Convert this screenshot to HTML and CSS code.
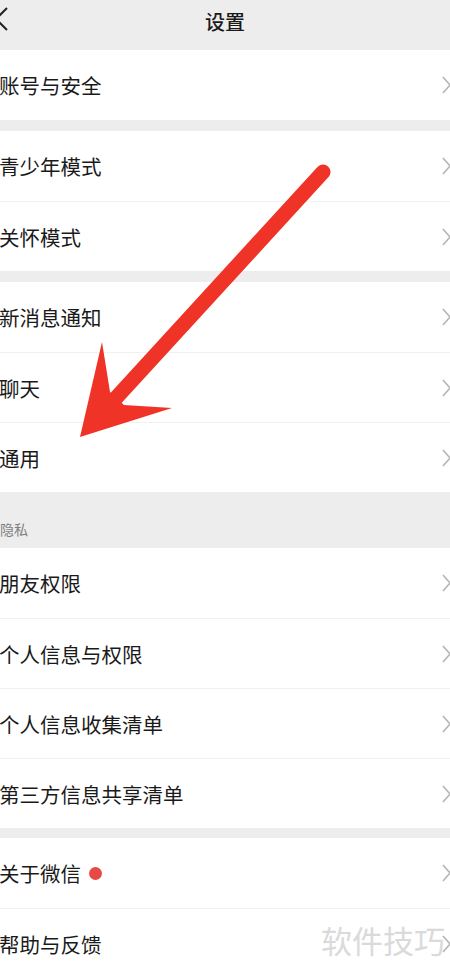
FILE: index.html
```html
<!DOCTYPE html>
<html lang="zh-CN">
<head>
<meta charset="utf-8">
<title>设置</title>
<link rel="stylesheet" href="styles.css">
</head>
<body>
<div class="page">
  <header class="topbar">
    <svg class="back" width="10" height="24" viewBox="0 0 10 24"><path d="M7 1 L-4 12 L7 23" fill="none" stroke="#222" stroke-width="2"/></svg>
    <h1 class="title">设置</h1>
  </header>

  <section class="group">
    <div class="row"><span class="label">账号与安全</span><svg class="chev" width="9" height="18" viewBox="0 0 9 18"><path d="M1 1 L8 9 L1 17" fill="none" stroke="#b5b5b5" stroke-width="1.6"/></svg></div>
  </section>

  <section class="group">
    <div class="row"><span class="label">青少年模式</span><svg class="chev" width="9" height="18" viewBox="0 0 9 18"><path d="M1 1 L8 9 L1 17" fill="none" stroke="#b5b5b5" stroke-width="1.6"/></svg></div>
    <div class="row"><span class="label">关怀模式</span><svg class="chev" width="9" height="18" viewBox="0 0 9 18"><path d="M1 1 L8 9 L1 17" fill="none" stroke="#b5b5b5" stroke-width="1.6"/></svg></div>
  </section>

  <section class="group">
    <div class="row"><span class="label">新消息通知</span><svg class="chev" width="9" height="18" viewBox="0 0 9 18"><path d="M1 1 L8 9 L1 17" fill="none" stroke="#b5b5b5" stroke-width="1.6"/></svg></div>
    <div class="row"><span class="label">聊天</span><svg class="chev" width="9" height="18" viewBox="0 0 9 18"><path d="M1 1 L8 9 L1 17" fill="none" stroke="#b5b5b5" stroke-width="1.6"/></svg></div>
    <div class="row"><span class="label">通用</span><svg class="chev" width="9" height="18" viewBox="0 0 9 18"><path d="M1 1 L8 9 L1 17" fill="none" stroke="#b5b5b5" stroke-width="1.6"/></svg></div>
  </section>

  <div class="section-title">隐私</div>
  <section class="group flush">
    <div class="row"><span class="label">朋友权限</span><svg class="chev" width="9" height="18" viewBox="0 0 9 18"><path d="M1 1 L8 9 L1 17" fill="none" stroke="#b5b5b5" stroke-width="1.6"/></svg></div>
    <div class="row"><span class="label">个人信息与权限</span><svg class="chev" width="9" height="18" viewBox="0 0 9 18"><path d="M1 1 L8 9 L1 17" fill="none" stroke="#b5b5b5" stroke-width="1.6"/></svg></div>
    <div class="row"><span class="label">个人信息收集清单</span><svg class="chev" width="9" height="18" viewBox="0 0 9 18"><path d="M1 1 L8 9 L1 17" fill="none" stroke="#b5b5b5" stroke-width="1.6"/></svg></div>
    <div class="row"><span class="label">第三方信息共享清单</span><svg class="chev" width="9" height="18" viewBox="0 0 9 18"><path d="M1 1 L8 9 L1 17" fill="none" stroke="#b5b5b5" stroke-width="1.6"/></svg></div>
  </section>

  <section class="group last">
    <div class="row"><span class="label">关于微信<span class="dot"></span></span><svg class="chev" width="9" height="18" viewBox="0 0 9 18"><path d="M1 1 L8 9 L1 17" fill="none" stroke="#b5b5b5" stroke-width="1.6"/></svg></div>
    <div class="row"><span class="label">帮助与反馈</span><svg class="chev" width="9" height="18" viewBox="0 0 9 18"><path d="M1 1 L8 9 L1 17" fill="none" stroke="#b5b5b5" stroke-width="1.6"/></svg></div>
  </section>

  <svg class="arrow" width="450" height="976" viewBox="0 0 450 976">
    <line x1="323" y1="172" x2="116" y2="398" stroke="#ef3326" stroke-width="15" stroke-linecap="round"/>
    <polygon points="80,437 102,342 110,392 124,405 172,408" fill="#ef3326"/>
  </svg>

  <div class="watermark">软件技巧</div>
</div>
</body>
</html>
```

FILE: styles.css
```css
* {
  box-sizing: border-box;
}

html, body {
  margin: 0;
  padding: 0;
}

body {
  background: #ededed;
  font-family: "Noto Sans CJK SC", "Noto Sans", sans-serif;
  color: #1a1a1a;
  overflow: hidden;
}

.page {
  position: relative;
  width: 450px;
  height: 976px;
  overflow: hidden;
}

.topbar {
  height: 50px;
  display: flex;
  align-items: flex-start;
  justify-content: center;
  position: relative;
  background: #ededed;
}

.back {
  position: absolute;
  left: 0;
  top: 7px;
}

.title {
  margin: 0;
  font-size: 20px;
  font-weight: 500;
  color: #1a1a1a;
  line-height: 1;
  padding-top: 12px;
}

.group {
  background: #ffffff;
  margin-bottom: 11px;
}

.group.flush {
  margin-bottom: 10px;
}

.row {
  height: 70px;
  display: flex;
  align-items: center;
  justify-content: space-between;
}

.row + .row {
  border-top: 1px solid #f1f1f1;
}

.label {
  font-size: 20.5px;
  line-height: 1;
  margin-left: -1px;
  display: flex;
  align-items: center;
  padding-top: 1px;
}

.chev {
  margin-right: -1px;
  flex: none;
}

.dot {
  display: inline-block;
  width: 13px;
  height: 13px;
  border-radius: 50%;
  background: #e64a45;
  margin-left: 8px;
}

.section-title {
  height: 56px;
  margin-top: -11px;
  display: flex;
  align-items: flex-end;
  padding-bottom: 12px;
  font-size: 14px;
  color: #7f7f7f;
  line-height: 1;
}

.arrow {
  position: absolute;
  left: 0;
  top: 0;
  pointer-events: none;
}

.watermark {
  position: absolute;
  right: 5px;
  top: 921px;
  font-size: 31px;
  line-height: 1.2;
  color: #dadada;
}
```
